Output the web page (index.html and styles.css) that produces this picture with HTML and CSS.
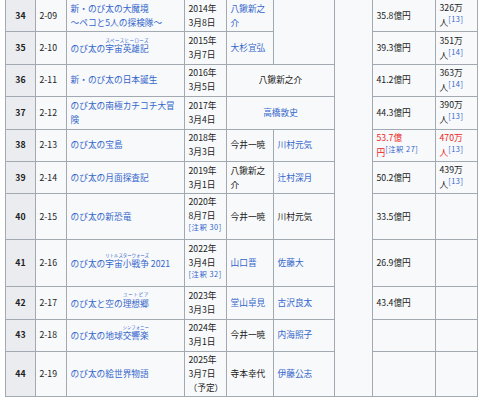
FILE: index.html
```html
<!DOCTYPE html>
<html lang="ja">
<head>
<meta charset="utf-8">
<link rel="stylesheet" href="styles.css">
</head>
<body>
<table class="films">
<colgroup>
<col class="c-no"><col class="c-num"><col class="c-title"><col class="c-date"><col class="c-dir"><col class="c-wri"><col class="c-sub"><col class="c-gross"><col class="c-att">
</colgroup>
<tbody>
<tr>
<th>34</th><td>2-09</td><td><a href="#" class="lk">新・のび太の大魔境<br>〜ペコと5人の探検隊〜</a></td><td>2014年<br>3月8日</td><td><a href="#" class="lk">八鍬新之介</a></td><td rowspan="2"></td><td rowspan="11"></td><td>35.8億円</td><td>326万<br>人<sup class="ref"><a href="#" class="lk">[13]</a></sup></td>
</tr>
<tr>
<th>35</th><td>2-10</td><td><a href="#" class="lk">のび太の<ruby>宇宙英雄記<rt>スペースヒーローズ</rt></ruby></a></td><td>2015年<br>3月7日</td><td><a href="#" class="lk">大杉宜弘</a></td><td>39.3億円</td><td>351万<br>人<sup class="ref"><a href="#" class="lk">[14]</a></sup></td>
</tr>
<tr>
<th>36</th><td>2-11</td><td><a href="#" class="lk">新・のび太の日本誕生</a></td><td>2016年<br>3月5日</td><td colspan="2" class="center">八鍬新之介</td><td>41.2億円</td><td>363万<br>人<sup class="ref"><a href="#" class="lk">[14]</a></sup></td>
</tr>
<tr>
<th>37</th><td>2-12</td><td><a href="#" class="lk">のび太の南極カチコチ大冒険</a></td><td>2017年<br>3月4日</td><td colspan="2" class="center"><a href="#" class="lk">高橋敦史</a></td><td>44.3億円</td><td>390万<br>人<sup class="ref"><a href="#" class="lk">[13]</a></sup></td>
</tr>
<tr>
<th>38</th><td>2-13</td><td><a href="#" class="lk">のび太の宝島</a></td><td>2018年<br>3月3日</td><td>今井一暁</td><td><a href="#" class="lk">川村元気</a></td><td class="red">53.7億<br>円<sup class="ref"><a href="#" class="lk">[注釈 27]</a></sup></td><td class="red">470万<br>人<sup class="ref"><a href="#" class="lk">[13]</a></sup></td>
</tr>
<tr>
<th>39</th><td>2-14</td><td><a href="#" class="lk">のび太の月面探査記</a></td><td>2019年<br>3月1日</td><td>八鍬新之介</td><td><a href="#" class="lk">辻村深月</a></td><td>50.2億円</td><td>439万<br>人<sup class="ref"><a href="#" class="lk">[13]</a></sup></td>
</tr>
<tr class="three">
<th>40</th><td>2-15</td><td><a href="#" class="lk">のび太の新恐竜</a></td><td>2020年<br>8月7日<br><sup class="ref"><a href="#" class="lk">[注釈 30]</a></sup></td><td>今井一暁</td><td>川村元気</td><td>33.5億円</td><td></td>
</tr>
<tr class="tall">
<th>41</th><td>2-16</td><td><a href="#" class="lk">のび太の<ruby>宇宙小戦争<rt>リトルスターウォーズ</rt></ruby> 2021</a></td><td>2022年<br>3月4日<br><sup class="ref"><a href="#" class="lk">[注釈 32]</a></sup></td><td><a href="#" class="lk">山口晋</a></td><td><a href="#" class="lk">佐藤大</a></td><td>26.9億円</td><td></td>
</tr>
<tr>
<th>42</th><td>2-17</td><td><a href="#" class="lk">のび太と空の<ruby>理想郷<rt>ユートピア</rt></ruby></a></td><td>2023年<br>3月3日</td><td><a href="#" class="lk">堂山卓見</a></td><td><a href="#" class="lk">古沢良太</a></td><td>43.4億円</td><td></td>
</tr>
<tr>
<th>43</th><td>2-18</td><td><a href="#" class="lk">のび太の地球<ruby>交響楽<rt>シンフォニー</rt></ruby></a></td><td>2024年<br>3月1日</td><td>今井一暁</td><td><a href="#" class="lk">内海照子</a></td><td></td><td></td>
</tr>
<tr class="three">
<th>44</th><td>2-19</td><td><a href="#" class="lk">のび太の絵世界物語</a></td><td>2025年<br>3月7日<br>（予定）</td><td>寺本幸代</td><td><a href="#" class="lk">伊藤公志</a></td><td></td><td></td>
</tr>
</tbody>
</table>
</body>
</html>
```
FILE: styles.css
```css
html, body {
  margin: 0;
  padding: 0;
  background: #ffffff;
}
body {
  font-family: "Noto Sans CJK JP", "Noto Sans", sans-serif;
  font-size: 8.7px;
  color: #202122;
}
.films {
  border-collapse: collapse;
  table-layout: fixed;
  width: 473px;
  margin: -1px 0 0 5px;
  background: #f8f9fa;
  border: 1px solid #a2a9b1;
  line-height: 14px;
}
.c-no { width: 30px; }
.c-num { width: 31px; }
.c-title { width: 118px; }
.c-date { width: 42px; }
.c-dir { width: 47px; }
.c-wri { width: 61px; }
.c-sub { width: 38px; }
.c-gross { width: 63px; }
.c-att { width: 42px; }
.films tr {
  height: 32.4px;
}
.films tr.three {
  height: 45px;
}
.films tr.tall {
  height: 47px;
}
.films th,
.films td {
  border: 1px solid #a2a9b1;
  padding: 1px 3.5px;
  vertical-align: middle;
  text-align: left;
}
.films th {
  background: #eaecf0;
  font-weight: bold;
  text-align: center;
}
.films td.center {
  text-align: center;
}
.lk {
  color: #3366cc;
  text-decoration: none;
}
.red {
  color: #ee2222;
}
.ref {
  font-size: 7.4px;
  line-height: 1;
  vertical-align: super;
  letter-spacing: 0.5px;
}
rt {
  font-size: 4.4px;
  line-height: 1;
  position: relative;
  top: -1.5px;
}
```
